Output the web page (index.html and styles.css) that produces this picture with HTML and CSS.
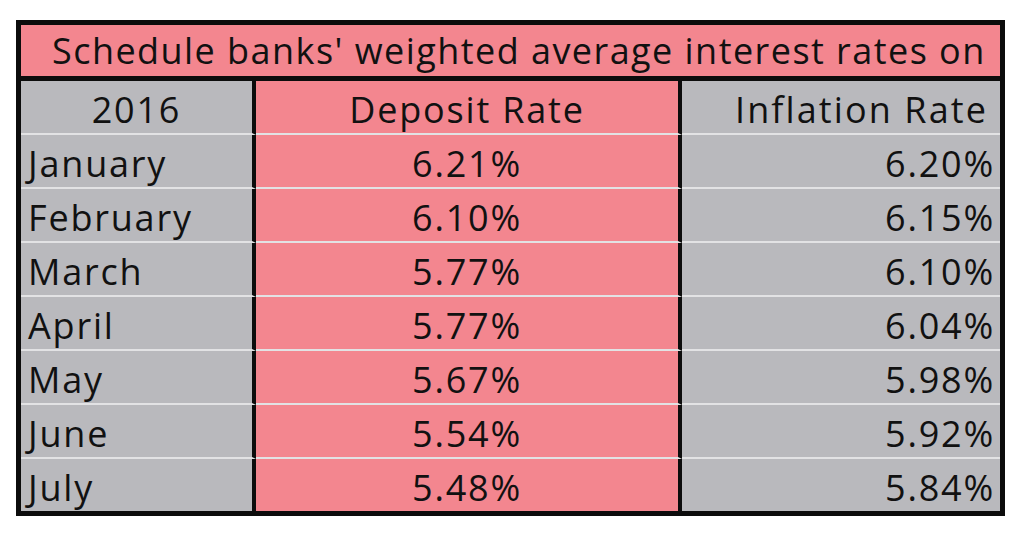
FILE: index.html
```html
<!DOCTYPE html>
<html>
<head>
<meta charset="utf-8">
<link rel="stylesheet" href="styles.css">
</head>
<body>
<div class="sheet">
  <div class="title">Schedule banks' weighted average interest rates on</div>
  <div class="grid">
    <div class="c1 hd">2016</div><div class="c2 hd">Deposit Rate</div><div class="c3 hd">Inflation Rate</div>
    <div class="c1">January</div><div class="c2">6.21%</div><div class="c3">6.20%</div>
    <div class="c1">February</div><div class="c2">6.10%</div><div class="c3">6.15%</div>
    <div class="c1">March</div><div class="c2">5.77%</div><div class="c3">6.10%</div>
    <div class="c1">April</div><div class="c2">5.77%</div><div class="c3">6.04%</div>
    <div class="c1">May</div><div class="c2">5.67%</div><div class="c3">5.98%</div>
    <div class="c1">June</div><div class="c2">5.54%</div><div class="c3">5.92%</div>
    <div class="c1 last">July</div><div class="c2 last">5.48%</div><div class="c3 last">5.84%</div>
  </div>
</div>
</body>
</html>
```

FILE: styles.css
```css
html, body {
  margin: 0;
  padding: 0;
  background: #ffffff;
}
body {
  padding: 20px 0 0 16px;
  font-family: "Open Sans", Lato, sans-serif;
  color: #111;
}
.sheet {
  width: 979px;
  border: 5px solid #0c0c0c;
  background: #b9b9bd;
}
.title {
  height: 51px;
  background: #f3868f;
  border-bottom: 5px solid #0c0c0c;
  font-size: 36px;
  line-height: 52px;
  padding-left: 31px;
  letter-spacing: 1.45px;
  white-space: nowrap;
}
.grid {
  display: grid;
  grid-template-columns: 235px 426px 318px;
}
.grid > div {
  height: 52px;
  border-bottom: 2px solid #e2e2e4;
  font-size: 36px;
  line-height: 57px;
  letter-spacing: 1.8px;
  white-space: nowrap;
}
.grid > div.last {
  border-bottom: none;
}
.c1 {
  background: #b9b9bd;
  border-right: 4px solid #0c0c0c;
  padding-left: 7px;
}
.c2 {
  background: #f3868f;
  border-right: 4px solid #0c0c0c;
  text-align: center;
}
.c3 {
  background: #b9b9bd;
  text-align: right;
  padding-right: 5px;
}
.c1.hd {
  text-align: center;
  padding-left: 0;
}
.c3.hd {
  padding-right: 12px;
  letter-spacing: 2.1px;
}
```
